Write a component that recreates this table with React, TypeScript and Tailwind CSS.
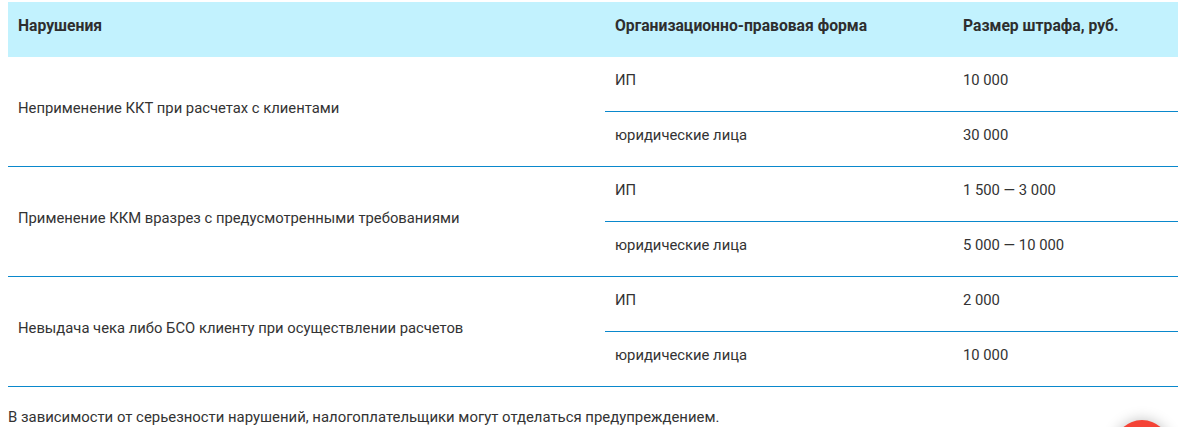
import React from "react";

const groups = [
  {
    label: "Неприменение ККТ при расчетах с клиентами",
    rows: [
      ["ИП", "10 000"],
      ["юридические лица", "30 000"],
    ],
  },
  {
    label: "Применение ККМ вразрез с предусмотренными требованиями",
    rows: [
      ["ИП", "1 500 — 3 000"],
      ["юридические лица", "5 000 — 10 000"],
    ],
  },
  {
    label: "Невыдача чека либо БСО клиенту при осуществлении расчетов",
    rows: [
      ["ИП", "2 000"],
      ["юридические лица", "10 000"],
    ],
  },
];

export default function App() {
  return (
    <div
      className="relative w-[1184px] h-[427px] overflow-hidden bg-white text-[#333] text-[14.8px]"
      style={{ fontFamily: "Roboto, 'Noto Sans', sans-serif" }}
    >
      <div className="ml-[8px] mr-[6px] mt-[2px]">
        <div className="grid grid-cols-[597px_348px_1fr] h-[55px] bg-[#c2f2fe] font-bold text-[#2e2e2e] text-[15.7px]">
          <div className="pl-[10px] pt-[14px] leading-[20px]">Нарушения</div>
          <div className="pl-[10px] pt-[14px] leading-[20px]">Организационно-правовая форма</div>
          <div className="pl-[10px] pt-[14px] leading-[20px]">Размер штрафа, руб.</div>
        </div>
        {groups.map((g, i) => (
          <div key={i} className="grid grid-cols-[597px_1fr] border-b border-[#0a88cc]">
            <div className="flex items-center pl-[10px] pb-[8px] leading-[20px]">{g.label}</div>
            <div className="flex flex-col">
              <div className="grid grid-cols-[348px_1fr] h-[55px] border-b border-[#0a88cc]">
                <div className="pl-[10px] pt-[13px] leading-[20px]">{g.rows[0][0]}</div>
                <div className="pl-[10px] pt-[13px] leading-[20px]">{g.rows[0][1]}</div>
              </div>
              <div className="grid grid-cols-[348px_1fr] h-[54px]">
                <div className="pl-[10px] pt-[13px] leading-[20px]">{g.rows[1][0]}</div>
                <div className="pl-[10px] pt-[13px] leading-[20px]">{g.rows[1][1]}</div>
              </div>
            </div>
          </div>
        ))}
      </div>
      <p className="ml-[8px] mt-[20px] leading-[20px] text-[14.9px]">
        В зависимости от серьезности нарушений, налогоплательщики могут отделаться предупреждением.
      </p>
      <div className="absolute left-[1114px] top-[420px] w-[56px] h-[56px] rounded-full bg-[#f44336] shadow-[0_0_14px_rgba(0,0,0,0.25)]" />
    </div>
  );
}
